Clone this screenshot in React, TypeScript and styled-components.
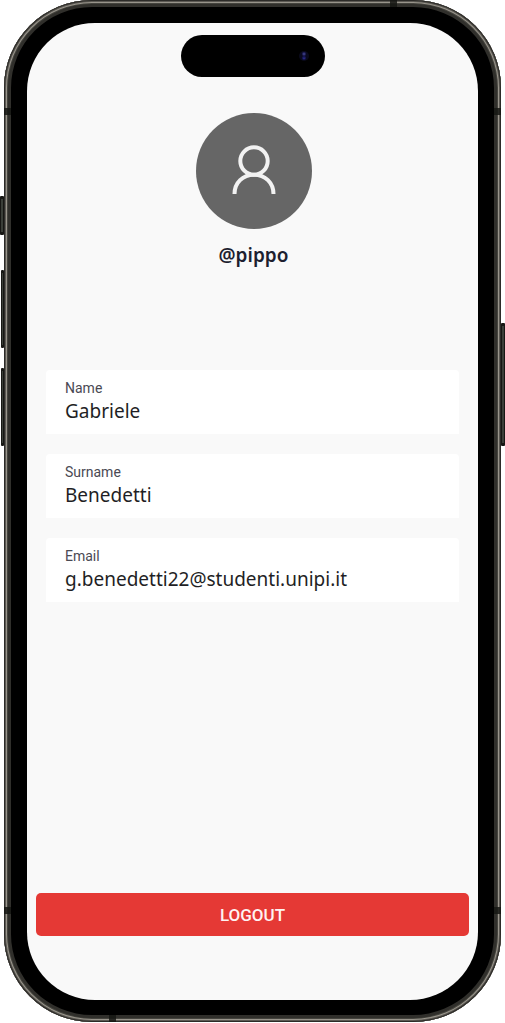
import React from "react";
import styled, { createGlobalStyle } from "styled-components";

const GlobalStyle = createGlobalStyle`
  *, *::before, *::after { box-sizing: border-box; }
  body { margin: 0; background: #ffffff; font-family: Roboto, sans-serif; }
`;

const Page = styled.div`
  display: flex;
  min-height: 100vh;
  padding: 0 4px 1px;
`;

const Phone = styled.div`
  position: relative;
  display: flex;
  flex: 1;
  padding: 23px 23px 22px;
  border-radius: 88px;
  background: #000000;
  box-shadow:
    inset 0 0 0 1px #2c2b28,
    inset 0 0 0 2px #5c5953,
    inset 0 0 0 3px #99958c,
    inset 0 0 0 4px #45443e,
    inset 0 0 0 7px #302f2b;
`;

const SideButton = styled.span<{ $side: "left" | "right"; $top: number; $height: number; $width: number }>`
  position: absolute;
  top: ${(p) => p.$top}px;
  ${(p) => p.$side}: -${(p) => p.$width}px;
  width: ${(p) => p.$width}px;
  height: ${(p) => p.$height}px;
  border: solid #171714;
  border-width: 3px 1px;
  border-radius: 1px;
  background: #3b3f39;
`;

const Band = styled.span<{ $edge: "left" | "right" | "top" | "bottom"; $offset: number }>`
  position: absolute;
  ${(p) => p.$edge}: 0;
  ${(p) =>
    p.$edge === "left" || p.$edge === "right"
      ? `top: ${p.$offset}px; width: 7px; height: 7px;`
      : `left: ${p.$offset}px; width: 7px; height: 7px;`}
  background: #151613;
  opacity: 0.85;
`;

const Screen = styled.main`
  display: flex;
  flex: 1;
  flex-direction: column;
  min-width: 0;
  padding: 12px 9px 64px;
  border-radius: 68px;
  background: #f9f9f9;
`;

const Island = styled.div`
  display: flex;
  align-items: center;
  justify-content: flex-end;
  align-self: center;
  width: 144px;
  height: 42px;
  padding-right: 15px;
  border-radius: 21px;
  background: #000000;
`;

const Profile = styled.header`
  display: flex;
  flex-direction: column;
  align-items: center;
  gap: 14px;
  margin-top: 36px;
  padding-left: 2px;
`;

const Avatar = styled.div`
  display: flex;
  width: 116px;
  height: 116px;
  border-radius: 50%;
  background: #666666;
`;

const Username = styled.h1`
  margin: 0;
  color: #1d1f30;
  font: 600 19px/24px "Noto Sans", sans-serif;
`;

const Fields = styled.form`
  display: flex;
  flex-direction: column;
  gap: 20px;
  margin: 103px 10px 40px;
`;

const Field = styled.label`
  display: flex;
  flex-direction: column;
  height: 64px;
  padding: 10px 19px;
  border-radius: 4px 4px 0 0;
  background: #ffffff;
  color: #4a4953;
  font-size: 14px;
  line-height: 16px;
`;

const FieldInput = styled.input`
  width: 100%;
  height: 30px;
  padding: 0;
  border: 0;
  outline: 0;
  background: transparent;
  color: #1f1f25;
  font: 400 19px/30px "Noto Sans", sans-serif;
`;

const LogoutButton = styled.button`
  height: 43px;
  margin-top: auto;
  border: 0;
  border-radius: 5px;
  background: #e53935;
  color: #fff3f2;
  font: 500 17px/24px Roboto, sans-serif;
  cursor: pointer;
`;

const fields = [
  { id: "name", label: "Name", value: "Gabriele" },
  { id: "surname", label: "Surname", value: "Benedetti" },
  { id: "email", label: "Email", value: "g.benedetti22@studenti.unipi.it" },
];

export default function App() {
  return (
    <>
      <GlobalStyle />
      <Page>
        <Phone>
          <SideButton $side="left" $top={196} $height={39} $width={4} />
          <SideButton $side="left" $top={270} $height={78} $width={3} />
          <SideButton $side="left" $top={368} $height={78} $width={3} />
          <SideButton $side="right" $top={323} $height={123} $width={4} />
          <Band $edge="left" $offset={108} />
          <Band $edge="right" $offset={108} />
          <Band $edge="left" $offset={907} />
          <Band $edge="right" $offset={907} />
          <Band $edge="top" $offset={386} />
          <Band $edge="bottom" $offset={105} />
          <Screen>
            <Island>
              <svg width="12" height="12" viewBox="0 0 12 12" aria-hidden="true">
                <circle cx="6" cy="6" r="5" fill="#0a0a1c" />
                <circle cx="6" cy="4" r="2" fill="#20205c" />
                <circle cx="6" cy="8" r="2" fill="#171758" />
                <circle cx="6" cy="4" r="0.7" fill="#6464ad" />
                <circle cx="6" cy="8.3" r="0.7" fill="#3737a0" />
              </svg>
            </Island>
            <Profile>
              <Avatar>
                <svg width="116" height="116" viewBox="0 0 116 116" fill="none" stroke="#f2f2f2" strokeWidth="4" aria-hidden="true">
                  <circle cx="58" cy="48" r="13.7" />
                  <path d="M38.5 81 C38.5 69.8 46.8 61.7 58 61.7 S77.5 69.8 77.5 81" />
                </svg>
              </Avatar>
              <Username>@pippo</Username>
            </Profile>
            <Fields>
              {fields.map((f) => (
                <Field key={f.id} htmlFor={f.id}>
                  {f.label}
                  <FieldInput id={f.id} name={f.id} defaultValue={f.value} />
                </Field>
              ))}
            </Fields>
            <LogoutButton type="button">LOGOUT</LogoutButton>
          </Screen>
        </Phone>
      </Page>
    </>
  );
}
